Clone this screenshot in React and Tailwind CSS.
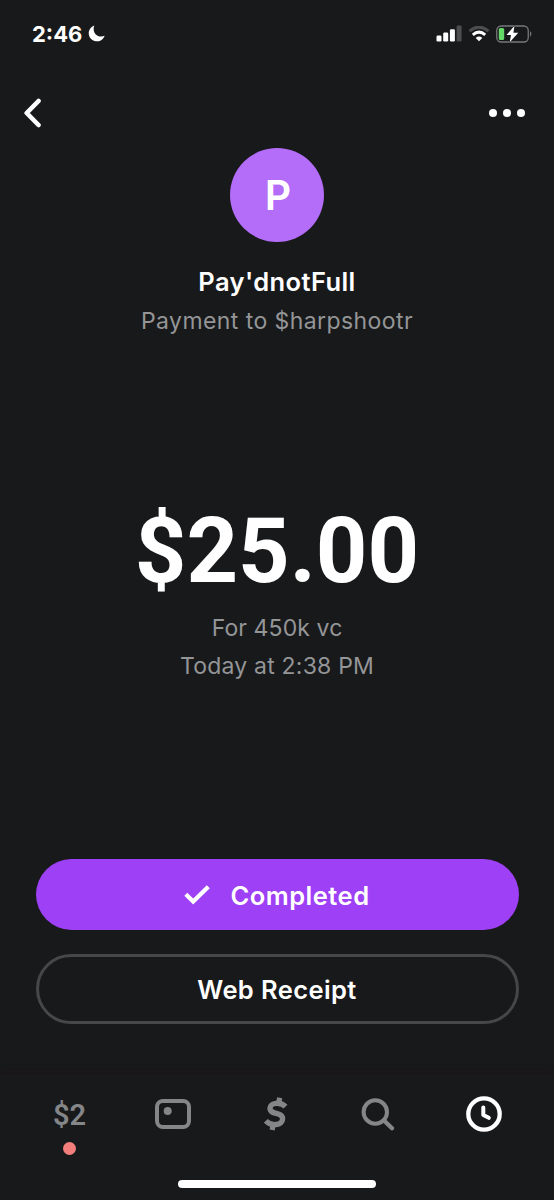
import React from "react";

const StatusBar = () => {
  return (
    <div className="flex h-[66px] items-center justify-between pl-8 pr-[22px] pt-[1px]">
      <div className="flex items-center gap-[6px]">
        <span className="font-['Inter',sans-serif] text-[22px] font-bold leading-none">
          2:46
        </span>
        <svg className="h-[17px] w-[17px]" viewBox="0 0 17 17" fill="currentColor">
          <path d="M6.3.4A8.2 8.2 0 1 0 16.7 10.8C9.5 13.6 3.6 7.6 6.3.4Z" />
        </svg>
      </div>
      <div className="flex items-center gap-[6px]">
        <svg className="h-[17px] w-[26px]" viewBox="0 0 26 17" fill="currentColor">
          <rect x="0.5" y="10.5" width="5" height="6" rx="1.3" />
          <rect x="7.2" y="7.5" width="5" height="9" rx="1.3" />
          <rect x="13.9" y="4.2" width="5" height="12.3" rx="1.3" />
          <rect x="20.6" y="0.5" width="5" height="16" rx="1.3" fill="#4c4d4e" />
        </svg>
        <svg className="h-[16px] w-[22px]" viewBox="0 0 22 16" fill="none">
          <path d="M1.5 5.2Q11-3 20.5 5.2" stroke="#4c4d4e" strokeWidth="3" />
          <path d="M4.8 8.8Q11 3.5 17.2 8.8" stroke="currentColor" strokeWidth="3" />
          <path d="M7.7 12Q11 9.2 14.3 12L11 15.3Z" fill="currentColor" />
        </svg>
        <svg className="h-[18px] w-[36px]" viewBox="0 0 36 18" fill="none">
          <rect x="0.75" y="1" width="31.5" height="16" rx="4.5" stroke="#77787a" strokeWidth="1.3" />
          <path d="M34 6.3C35.8 7.2 35.8 10.8 34 11.7Z" fill="#77787a" />
          <rect x="2.8" y="3" width="5.4" height="12" rx="1.6" fill="#65d967" />
          <path
            d="M18.5.8 10.5 10H15L13.7 17.2 22.3 7.8H17.4Z"
            fill="#fff"
            stroke="#18191b"
            strokeWidth="1"
            paintOrder="stroke"
          />
        </svg>
      </div>
    </div>
  );
};

const Header = () => {
  return (
    <div className="flex h-[82px] items-center justify-between pl-[23px] pr-[29px] pt-[11px]">
      <button type="button" aria-label="Back">
        <svg className="h-[30px] w-[19px]" viewBox="0 0 19 30" fill="none">
          <path
            d="M15.5 3 3.7 15 15.5 27"
            stroke="currentColor"
            strokeWidth="4.6"
            strokeLinecap="round"
            strokeLinejoin="round"
          />
        </svg>
      </button>
      <button type="button" aria-label="More" className="flex gap-[6px]">
        <span className="h-2 w-2 rounded-full bg-white" />
        <span className="h-2 w-2 rounded-full bg-white" />
        <span className="h-2 w-2 rounded-full bg-white" />
      </button>
    </div>
  );
};

const TabBar = () => {
  return (
    <nav className="flex h-[126px] flex-col items-center border-t border-[#1b1719] pb-[12px] shadow-[0_-2px_6px_#1a1517]">
      <div className="grid w-full grow grid-cols-[139px_68px_138px_66px_143px] text-[#858688]">
        <button type="button" className="flex flex-col items-center pt-[24px]">
          <span className="font-['Roboto',sans-serif] text-[29px] font-semibold leading-8">$2</span>
          <span className="mt-[11px] h-[13px] w-[13px] rounded-full bg-[#f37f7c]" />
        </button>
        <button type="button" aria-label="Card" className="flex justify-center pt-[24px]">
          <svg className="h-[30px] w-[36px]" viewBox="0 0 36 30" fill="none">
            <rect x="2" y="2" width="32" height="26" rx="6" stroke="currentColor" strokeWidth="4" />
            <circle cx="12.7" cy="12" r="4" fill="currentColor" />
          </svg>
        </button>
        <button type="button" aria-label="Pay" className="flex justify-center pt-[22px]">
          <svg className="h-[34px] w-[24px]" viewBox="0 0 24 34" fill="none" stroke="currentColor">
            <path
              d="M21.5 9.7C16.8 4.7 6 5.3 6 11.3 6 18.3 18.6 14.6 18.6 21.8 18.6 28.8 7 29.5 1.8 23.8"
              strokeWidth="5.4"
            />
            <path d="M14.7 6 15.7 .8M8.1 33 9.1 28" strokeWidth="5.2" />
          </svg>
        </button>
        <button type="button" aria-label="Search" className="flex justify-center pt-[22px]">
          <svg className="h-[34px] w-[34px]" viewBox="0 0 34 34" fill="none" stroke="currentColor">
            <circle cx="14.3" cy="15" r="11.7" strokeWidth="4" />
            <path d="M23 23.5 31 31.3" strokeWidth="4.3" strokeLinecap="round" />
          </svg>
        </button>
        <button type="button" aria-label="Activity" className="flex justify-center pl-[2px] pt-[21px] text-white">
          <svg className="h-[36px] w-[36px]" viewBox="0 0 36 36" fill="none" stroke="currentColor">
            <circle cx="18" cy="18" r="15.7" strokeWidth="4.3" />
            <path d="M17.3 11.5V19L22.8 21.8" strokeWidth="4" strokeLinecap="round" strokeLinejoin="round" />
          </svg>
        </button>
      </div>
      <div className="h-2 w-[198px] rounded-full bg-white" />
    </nav>
  );
};

const App = () => {
  return (
    <div className="flex h-[1200px] w-full flex-col overflow-hidden bg-[#18191b] font-['Inter',sans-serif] text-white">
      <StatusBar />
      <Header />
      <main className="flex grow flex-col items-center px-[35.5px]">
        <div className="flex h-[94px] w-[94px] items-center justify-center rounded-full bg-[#b46df8] pl-[2px] pt-[1px] text-[41px] font-semibold">
          P
        </div>
        <h1 className="mt-[23px] whitespace-nowrap text-[25.5px] font-semibold leading-[34px] tracking-[0.4px]">
          Pay'dnotFull
        </h1>
        <p className="mt-[5px] whitespace-nowrap text-[23px] leading-[34px] tracking-[0.42px] text-[#949597]">
          Payment to $harpshootr
        </p>
        <div className="mt-[164px] whitespace-nowrap font-['Roboto',sans-serif] text-[90px] font-bold leading-[100px]">
          $25.00
        </div>
        <p className="mt-[7px] whitespace-nowrap text-[23px] leading-[38px] tracking-[0.1px] text-[#949597]">
          For 450k vc
        </p>
        <p className="whitespace-nowrap text-[23px] leading-[38px] tracking-[0.2px] text-[#949597]">
          Today at 2:38 PM
        </p>
        <button
          type="button"
          className="mt-auto flex h-[71px] w-full items-center justify-center gap-5 rounded-full bg-[#9e40f5] text-[25.5px] font-semibold tracking-[0.5px]"
        >
          <svg className="h-[20px] w-[26px]" viewBox="0 0 26 20" fill="none">
            <path d="M1.8 9.3 9.2 16.5 24.3 1.8" stroke="currentColor" strokeWidth="4.3" />
          </svg>
          <span className="pt-[3px]">Completed</span>
        </button>
        <button
          type="button"
          className="mb-[50px] mt-6 h-[70px] w-full shrink-0 rounded-full border-[3px] border-[#464749] pt-[2px] text-[25.5px] font-semibold tracking-[0.4px]"
        >
          Web Receipt
        </button>
      </main>
      <TabBar />
    </div>
  );
};

export default App;
